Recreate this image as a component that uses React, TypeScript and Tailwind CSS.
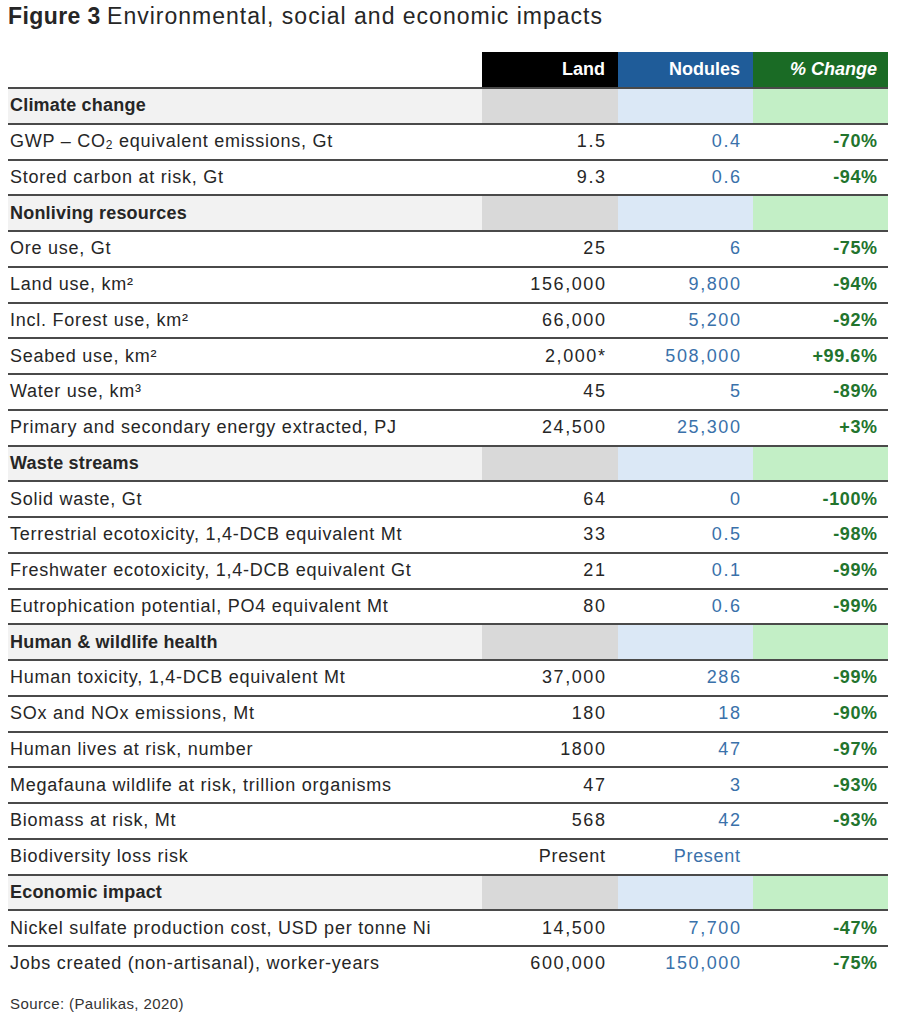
import React from "react";

type Row =
  | { kind: "section"; label: string }
  | { kind: "data"; label: React.ReactNode; land: string; nodules: string; change: string };

const rows: Row[] = [
  { kind: "section", label: "Climate change" },
  {
    kind: "data",
    label: (
      <span>
        GWP – CO<sub className="relative top-[2px] align-baseline text-[12px]">2</sub> equivalent emissions, Gt
      </span>
    ),
    land: "1.5",
    nodules: "0.4",
    change: "-70%",
  },
  { kind: "data", label: "Stored carbon at risk, Gt", land: "9.3", nodules: "0.6", change: "-94%" },
  { kind: "section", label: "Nonliving resources" },
  { kind: "data", label: "Ore use, Gt", land: "25", nodules: "6", change: "-75%" },
  { kind: "data", label: "Land use, km²", land: "156,000", nodules: "9,800", change: "-94%" },
  { kind: "data", label: "Incl. Forest use, km²", land: "66,000", nodules: "5,200", change: "-92%" },
  { kind: "data", label: "Seabed use, km²", land: "2,000*", nodules: "508,000", change: "+99.6%" },
  { kind: "data", label: "Water use, km³", land: "45", nodules: "5", change: "-89%" },
  { kind: "data", label: "Primary and secondary energy extracted, PJ", land: "24,500", nodules: "25,300", change: "+3%" },
  { kind: "section", label: "Waste streams" },
  { kind: "data", label: "Solid waste, Gt", land: "64", nodules: "0", change: "-100%" },
  { kind: "data", label: "Terrestrial ecotoxicity, 1,4-DCB equivalent Mt", land: "33", nodules: "0.5", change: "-98%" },
  { kind: "data", label: "Freshwater ecotoxicity, 1,4-DCB equivalent Gt", land: "21", nodules: "0.1", change: "-99%" },
  { kind: "data", label: "Eutrophication potential, PO4 equivalent Mt", land: "80", nodules: "0.6", change: "-99%" },
  { kind: "section", label: "Human & wildlife health" },
  { kind: "data", label: "Human toxicity, 1,4-DCB equivalent Mt", land: "37,000", nodules: "286", change: "-99%" },
  { kind: "data", label: "SOx and NOx emissions, Mt", land: "180", nodules: "18", change: "-90%" },
  { kind: "data", label: "Human lives at risk, number", land: "1800", nodules: "47", change: "-97%" },
  { kind: "data", label: "Megafauna wildlife at risk, trillion organisms", land: "47", nodules: "3", change: "-93%" },
  { kind: "data", label: "Biomass at risk, Mt", land: "568", nodules: "42", change: "-93%" },
  { kind: "data", label: "Biodiversity loss risk", land: "Present", nodules: "Present", change: "" },
  { kind: "section", label: "Economic impact" },
  { kind: "data", label: "Nickel sulfate production cost, USD per tonne Ni", land: "14,500", nodules: "7,700", change: "-47%" },
  { kind: "data", label: "Jobs created (non-artisanal), worker-years", land: "600,000", nodules: "150,000", change: "-75%" },
];

// digits in the source font are wide, words less so
function Value({ v }: { v: string }) {
  const isNum = /\d/.test(v);
  return <span className={isNum ? "mr-[-1.6px] tracking-[1.6px]" : "mr-[-0.7px] tracking-[0.7px]"}>{v}</span>;
}

export default function App() {
  return (
    <div className="min-h-screen w-[903px] bg-white font-['Liberation_Sans',Arial,sans-serif] text-[#262626]">
      <div className="px-[8px] pt-[2px]">
        <h1 className="h-[50px] text-[23px] leading-[28px]">
          <span className="font-bold tracking-[0.4px]">Figure 3</span>{" "}
          <span className="tracking-[1px]">Environmental, social and economic impacts</span>
        </h1>

        <div className="w-[880px]">
          {/* column headers */}
          <div className="flex h-[35px] text-[18px] font-bold text-white">
            <div className="w-[474px]" />
            <div className="flex w-[136px] items-center justify-end bg-black pr-[13px]">Land</div>
            <div className="flex w-[135px] items-center justify-end bg-[#1f5c99] pr-[13px]">Nodules</div>
            <div className="flex w-[135px] items-center justify-end bg-[#1a6b25] pr-[11px] italic">% Change</div>
          </div>

          {rows.map((r, i) =>
            r.kind === "section" ? (
              <div key={i} className="flex h-[35.75px] border-t-2 border-[#4a4a4a] text-[18px]">
                <div className="flex w-[474px] items-center bg-[#f2f2f2] pl-[2px] font-bold tracking-[0.2px]">
                  {r.label}
                </div>
                <div className="w-[136px] bg-[#d9d9d9]" />
                <div className="w-[135px] bg-[#dbe8f6]" />
                <div className="w-[135px] bg-[#c3efc6]" />
              </div>
            ) : (
              <div key={i} className="flex h-[35.75px] border-t-2 border-[#4a4a4a] text-[18px]">
                <div className="flex w-[474px] items-center whitespace-nowrap pl-[2px] tracking-[0.75px]">{r.label}</div>
                <div className="flex w-[136px] items-center justify-end pr-[13px]">
                  <Value v={r.land} />
                </div>
                <div className="flex w-[135px] items-center justify-end pr-[13px] text-[#3a71aa]">
                  <Value v={r.nodules} />
                </div>
                <div className="flex w-[135px] items-center justify-end pr-[11px] font-bold tracking-[0.6px] text-[#22742d]">
                  <span className="mr-[-0.6px]">{r.change}</span>
                </div>
              </div>
            )
          )}
        </div>

        <p className="mt-[12px] pl-[2px] text-[15px] tracking-[0.4px] text-[#333]">Source: (Paulikas, 2020)</p>
      </div>
    </div>
  );
}
